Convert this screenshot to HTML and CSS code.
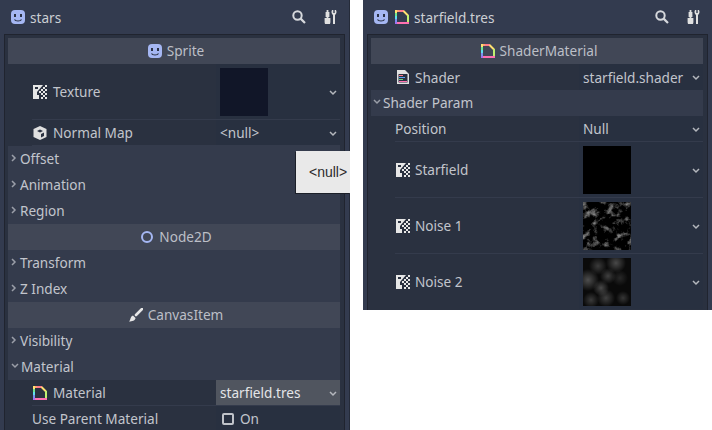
FILE: index.html
```html
<!DOCTYPE html>
<html lang="en">
  <head>
    <meta charset="UTF-8" />
    <title>Inspector</title>
    <link rel="stylesheet" href="styles.css">
  </head>
  <body>
    <svg class="sprite" width="0" height="0">
      <symbol id="i-face" viewBox="0 0 14 14">
        <rect width="14" height="14" rx="4" fill="#a5b7f3" />
        <rect x="3" y="4" width="2" height="3" fill="#2b3245" />
        <rect x="9" y="4" width="2" height="3" fill="#2b3245" />
        <path d="M3.5 9.5c1 2 6 2 7 0" fill="none" stroke="#2b3245" stroke-width="1.2" />
      </symbol>
      <symbol id="i-search" viewBox="0 0 14 14">
        <circle cx="5.5" cy="5.5" r="4.2" fill="none" stroke="#d6d8dc" stroke-width="2" />
        <path d="M8.6 8.6l4.4 4.4" stroke="#d6d8dc" stroke-width="2.2" />
      </symbol>
      <symbol id="i-tools" viewBox="0 0 14 14">
        <path d="M2.6 0h1.8v2h1v5h-1v1h2v4a2.8 2.8 0 0 1-5.8 0V8h2V7h-1V2h1z" fill="#e0e0e0" />
        <path d="M8 0h1.3v3h1.4V0H12c1 1.8.5 4-1 5v9H9V5C7.5 4 7 1.8 8 0z" fill="#e0e0e0" />
      </symbol>
      <symbol id="i-material" viewBox="0 0 14 14">
        <path d="M1 0v3" stroke="#ffe070" stroke-width="2" />
        <path d="M1 3v3" stroke="#70e890" stroke-width="2" />
        <path d="M1 6v3" stroke="#60e0f0" stroke-width="2" />
        <path d="M1 9v3" stroke="#7a90f0" stroke-width="2" />
        <path d="M0 13h2" stroke="#a070f0" stroke-width="2" />
        <path d="M2 13h12" stroke="#ff70b0" stroke-width="2" />
        <path d="M2 1h2" stroke="#ffa070" stroke-width="2" />
        <path d="M4 1h5" stroke="#ff7a8a" stroke-width="2" />
        <path d="M8.5 1L13 5.5" stroke="#ffe070" stroke-width="2" fill="none" />
        <path d="M13 5v7" stroke="#c0f070" stroke-width="2" />
      </symbol>
      <symbol id="i-texture" viewBox="0 0 14 14">
        <path fill="#e6e6e6" d="M0 0h10L4 7v3h2v4H0z" />
        <path fill="#2a3140" d="M2 2h3v2H2z" />
        <path fill="#e6e6e6" d="M12 0h2v2h-2zM10 2h2v2h-2zM12 4h2v2h-2zM8 4h2v2H8zM10 6h2v2h-2zM6 6h2v2H6zM12 8h2v2h-2zM8 8h2v2H8zM10 10h2v2h-2zM12 12h2v2h-2zM8 12h2v2H8z" />
      </symbol>
      <symbol id="i-cube" viewBox="0 0 14 14">
        <path d="M7 0l6.5 3v8L7 14 .5 11V3z" fill="#e0e0e0" />
        <path d="M7 3.5L4 5l3 1.5L10 5zM8 8v3.5l3-1.5V6.5z" fill="#2a3140" />
      </symbol>
      <symbol id="i-shader" viewBox="0 0 14 14">
        <path d="M1 0h8l4 4v10H1z" fill="#e0e0e0" />
        <rect x="2.5" y="4" width="9" height="8.5" fill="#2a3140" />
        <path d="M3 5h4v1H3z" fill="#ff7a8a" />
        <path d="M3 7h6v1H3z" fill="#5a9ff0" />
        <path d="M3 9h4v1H3z" fill="#70d080" />
        <path d="M3 11h8v1H3z" fill="#ff70b0" />
      </symbol>
      <symbol id="i-brush" viewBox="0 0 14 14">
        <path d="M13 1L7 7" stroke="#e6e6e6" stroke-width="2.6" stroke-linecap="round" />
        <path d="M4 7.5L6.5 10c0 2.5-3.5 3.5-6.5 3.5 1.5-1 1-2.5 2-4.2C2.5 8.3 3.5 7.5 4 7.5z" fill="#e6e6e6" />
      </symbol>
      <symbol id="i-chevron-down" viewBox="0 0 8 6">
        <path d="M1 1l3 3 3-3" fill="none" stroke="currentColor" stroke-width="1.5" />
      </symbol>
      <symbol id="i-chevron-right" viewBox="0 0 6 8">
        <path d="M1 1l3 3-3 3" fill="none" stroke="currentColor" stroke-width="1.5" />
      </symbol>
      <filter id="noise-fine" x="0" y="0" width="100%" height="100%" color-interpolation-filters="sRGB">
        <feTurbulence type="fractalNoise" baseFrequency="0.13" numOctaves="4" seed="11" />
        <feColorMatrix values="3.4 0 0 0 -1.7  3.4 0 0 0 -1.7  3.4 0 0 0 -1.7  0 0 0 0 1" />
      </filter>
    </svg>

    <div class="panes">
      <!-- Sprite inspector -->
      <section class="pane">
        <header class="toolbar">
          <svg class="icon"><use href="#i-face" /></svg>
          <span class="toolbar-title">stars</span>
          <svg class="icon tool-search"><use href="#i-search" /></svg>
          <svg class="icon tool-extra"><use href="#i-tools" /></svg>
        </header>
        <div class="inspector">
          <div class="section-head"><svg class="icon"><use href="#i-face" /></svg>Sprite</div>
          <div class="row row-tall">
            <div class="row-label"><svg class="icon"><use href="#i-texture" /></svg>Texture</div>
            <div class="row-value"><div class="thumb thumb-stars"></div><svg class="chevron"><use href="#i-chevron-down" /></svg></div>
          </div>
          <div class="row">
            <div class="row-label"><svg class="icon"><use href="#i-cube" /></svg>Normal Map</div>
            <div class="row-value">&lt;null&gt;<svg class="chevron"><use href="#i-chevron-down" /></svg></div>
          </div>
          <div class="group"><svg class="arrow"><use href="#i-chevron-right" /></svg>Offset</div>
          <div class="group"><svg class="arrow"><use href="#i-chevron-right" /></svg>Animation</div>
          <div class="group"><svg class="arrow"><use href="#i-chevron-right" /></svg>Region</div>
          <div class="section-head">
            <svg class="icon" viewBox="0 0 14 14"><circle cx="7" cy="7" r="5" fill="none" stroke="#a5b7f3" stroke-width="2" /></svg>Node2D
          </div>
          <div class="group"><svg class="arrow"><use href="#i-chevron-right" /></svg>Transform</div>
          <div class="group"><svg class="arrow"><use href="#i-chevron-right" /></svg>Z Index</div>
          <div class="section-head"><svg class="icon"><use href="#i-brush" /></svg>CanvasItem</div>
          <div class="group"><svg class="arrow"><use href="#i-chevron-right" /></svg>Visibility</div>
          <div class="group"><svg class="arrow-open"><use href="#i-chevron-down" /></svg>Material</div>
          <div class="row">
            <div class="row-label"><svg class="icon"><use href="#i-material" /></svg>Material</div>
            <div class="row-value row-value-hover">starfield.tres<svg class="chevron"><use href="#i-chevron-down" /></svg></div>
          </div>
          <div class="row">
            <div class="row-label">Use Parent Material</div>
            <div class="row-value"><span class="checkbox"></span>On</div>
          </div>
        </div>
      </section>

      <!-- Material inspector -->
      <section class="pane pane-short">
        <header class="toolbar">
          <svg class="icon"><use href="#i-face" /></svg>
          <svg class="icon toolbar-second"><use href="#i-material" /></svg>
          <span class="toolbar-title">starfield.tres</span>
          <svg class="icon tool-search"><use href="#i-search" /></svg>
          <svg class="icon tool-extra"><use href="#i-tools" /></svg>
        </header>
        <div class="inspector">
          <div class="section-head"><svg class="icon"><use href="#i-material" /></svg>ShaderMaterial</div>
          <div class="row row-flat">
            <div class="row-label"><svg class="icon"><use href="#i-shader" /></svg>Shader</div>
            <div class="row-value">starfield.shader<svg class="chevron"><use href="#i-chevron-down" /></svg></div>
          </div>
          <div class="group group-open"><svg class="arrow-open"><use href="#i-chevron-down" /></svg>Shader Param</div>
          <div class="row">
            <div class="row-label">Position</div>
            <div class="row-value">Null<svg class="chevron"><use href="#i-chevron-down" /></svg></div>
          </div>
          <div class="row row-tall">
            <div class="row-label"><svg class="icon"><use href="#i-texture" /></svg>Starfield</div>
            <div class="row-value"><div class="thumb thumb-black"></div><svg class="chevron"><use href="#i-chevron-down" /></svg></div>
          </div>
          <div class="row row-tall">
            <div class="row-label"><svg class="icon"><use href="#i-texture" /></svg>Noise 1</div>
            <div class="row-value">
              <div class="thumb thumb-noise1">
                <svg class="thumb-fine" width="48" height="48"><rect width="48" height="48" filter="url(#noise-fine)" /></svg>
              </div>
              <svg class="chevron"><use href="#i-chevron-down" /></svg>
            </div>
          </div>
          <div class="row row-tall row-last">
            <div class="row-label"><svg class="icon"><use href="#i-texture" /></svg>Noise 2</div>
            <div class="row-value"><div class="thumb thumb-noise2"></div><svg class="chevron"><use href="#i-chevron-down" /></svg></div>
          </div>
        </div>
      </section>
    </div>

    <div class="tooltip">&lt;null&gt;</div>
  </body>
</html>
```

FILE: styles.css
```css
/* General Styles */
html,
body {
  margin: 0;
  padding: 0;
  height: 430px;
  overflow: hidden;
  background: #ffffff;
}

body {
  position: relative;
  font-family: "Noto Sans", sans-serif;
  font-size: 13.6px;
  color: #c2c5cc;
}

.sprite {
  position: absolute;
}

.panes {
  display: flex;
  gap: 13px;
  align-items: flex-start;
}

.pane {
  width: 349px;
  height: 430px;
  overflow: hidden;
  background: #333b4f;
  border-right: 1px solid #252b39;
}

.pane-short {
  height: 310px;
  border-right: none;
}

/* Toolbar */
.toolbar {
  display: flex;
  align-items: center;
  height: 34px;
  padding-left: 11px;
  box-sizing: border-box;
}

.toolbar-title {
  margin-left: 5px;
  flex: 1;
  color: #cccfd4;
}

.toolbar-second {
  margin-left: 7px;
}

.icon {
  display: block;
  flex: none;
  width: 14px;
  height: 14px;
}

.tool-search {
  margin-right: 18px;
}

.tool-extra {
  margin-right: 11px;
}

/* Inspector */
.inspector {
  margin-left: 4px;
  width: 341px;
  box-sizing: border-box;
  min-height: 400px;
  padding: 3px 4px 0 3px;
  background: #2a3140;
  border-top: 1px solid #20242f;
  border-left: 1px solid #20242f;
  border-right: 1px solid #20242f;
}

.section-head {
  display: flex;
  align-items: center;
  justify-content: center;
  gap: 5px;
  height: 26px;
  box-sizing: border-box;
  padding: 0 0 1px 4px;
  background: #414756;
  color: #bcbfc7;
}

.group {
  display: flex;
  align-items: center;
  height: 26px;
  box-sizing: border-box;
  padding: 0 0 2px 3px;
  background: #343b4c;
}

.group-open {
  padding-left: 2px;
}

.arrow {
  width: 6px;
  height: 8px;
  margin-right: 3px;
  color: #9a9ea8;
}

.arrow-open {
  width: 8px;
  height: 6px;
  margin-right: 2px;
  color: #9a9ea8;
}

.row {
  display: grid;
  grid-template-columns: 184px 1fr;
  height: 26px;
  margin-left: 24px;
  box-sizing: border-box;
  border-bottom: 1px solid #343b4c;
}

.row-tall {
  height: 56px;
}

.row-flat {
  border-bottom: none;
}

.row-last {
  border-bottom-color: transparent;
}

.row-label {
  display: flex;
  align-items: center;
  gap: 6px;
}

.pane-short .row-label {
  gap: 5px;
}

.row-label .icon {
  margin-left: 1px;
}

.row-value {
  position: relative;
  display: flex;
  align-items: center;
  padding-left: 4px;
  background: #283040;
}

.row-value-hover {
  background: #50555f;
  color: #e4e5e8;
}

.chevron {
  position: absolute;
  right: 3px;
  top: 50%;
  width: 8px;
  height: 6px;
  margin-top: -2px;
  color: #b4b7bd;
}

.checkbox {
  width: 8px;
  height: 8px;
  margin: 0 6px 0 2px;
  border: 2px solid #c0c3c9;
  border-radius: 2px;
}

/* Texture previews */
.thumb {
  position: relative;
  width: 48px;
  height: 48px;
  align-self: flex-start;
  margin-top: 4px;
  overflow: hidden;
}

.thumb-stars {
  background: #111628;
}

.thumb-black {
  background: #000000;
}

.thumb-noise1 {
  background: #000000;
}

.thumb-fine {
  display: block;
  opacity: 0.5;
}

.thumb-noise2 {
  background:
    radial-gradient(circle 9px at 15px 8px, rgba(255, 255, 255, 0.2), transparent),
    radial-gradient(circle 10px at 33px 5px, rgba(255, 255, 255, 0.26), transparent),
    radial-gradient(circle 11px at 5px 22px, rgba(255, 255, 255, 0.28), transparent),
    radial-gradient(circle 8px at 25px 18px, rgba(255, 255, 255, 0.22), transparent),
    radial-gradient(circle 8px at 37px 20px, rgba(255, 255, 255, 0.12), transparent),
    radial-gradient(circle 8px at 18px 30px, rgba(255, 255, 255, 0.26), transparent),
    radial-gradient(circle 8px at 8px 42px, rgba(255, 255, 255, 0.2), transparent),
    radial-gradient(circle 9px at 23px 40px, rgba(255, 255, 255, 0.22), transparent),
    radial-gradient(circle 7px at 40px 40px, rgba(255, 255, 255, 0.18), transparent),
    #0a0a0a;
}

/* Dropdown tooltip */
.tooltip {
  position: absolute;
  left: 296px;
  top: 151px;
  box-sizing: border-box;
  width: 54px;
  height: 42px;
  padding-left: 13px;
  line-height: 42px;
  background: #e9e9e9;
  box-shadow: -1px 1px 0 #1c2029;
  color: #2c2c2c;
  font-family: "Liberation Sans", sans-serif;
  font-size: 14px;
}
```
